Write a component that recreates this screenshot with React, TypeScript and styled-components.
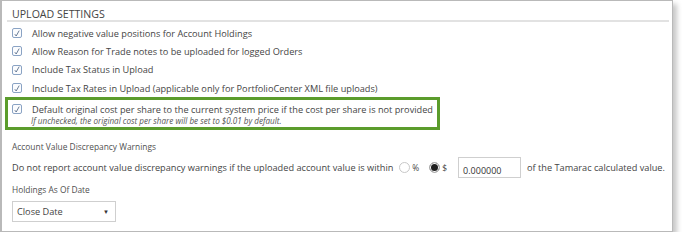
import styled, { createGlobalStyle } from "styled-components";

const GlobalStyle = createGlobalStyle`
  body {
    margin: 0;
    background: #ffffff;
    font-family: "Open Sans", "Noto Sans", sans-serif;
  }
`;

const Panel = styled.section`
  width: 673px;
  height: 232px;
  box-sizing: border-box;
  border: 1px solid #b9b9b9;
  border-left-width: 2px;
  background: #ffffff;
  box-shadow: 4px 4px 5px rgba(0, 0, 0, 0.22);
  padding: 7px 3px 0 5px;
  color: #474747;
`;

const Header = styled.div`
  border-bottom: 2px solid #e2e2e2;
  padding: 0 0 0 5px;
`;

const Title = styled.h2`
  margin: 0;
  font-size: 10.6px;
  font-weight: 400;
  line-height: 12px;
  color: #444444;
`;

const CheckList = styled.div`
  display: flex;
  flex-direction: column;
  padding: 2px 0 0 5px;
`;

const CheckRow = styled.label`
  display: flex;
  align-items: center;
  gap: 10px;
  height: 18.3px;
  font-size: 9.2px;
  color: #454545;
`;

const Box = styled.span`
  width: 8px;
  height: 8px;
  flex: none;
  border: 1px solid #8aa3c4;
  border-radius: 2px;
  background: #fbfcfe;
  display: flex;
  align-items: center;
  justify-content: center;
`;

const Highlight = styled.div`
  margin-left: -7px;
  width: 435px;
  box-sizing: border-box;
  border: 3px solid #5b9c2c;
  padding: 0 0 0 4px;
  height: 33px;
  display: flex;
  flex-direction: column;
`;

const Note = styled.div`
  font-size: 8.1px;
  font-style: italic;
  color: #555555;
  padding-left: 19px;
  margin-top: -3px;
`;

const Group = styled.div`
  padding: 0 0 0 5px;
`;

const Label = styled.div<{ $top: number }>`
  font-size: 8.4px;
  color: #505050;
  margin-top: ${(p) => p.$top}px;
  line-height: 12px;
`;

const Line = styled.div`
  display: flex;
  align-items: center;
  font-size: 9.2px;
  color: #454545;
  margin-top: 3px;
  height: 22px;
`;

const Radio = styled.span<{ $on?: boolean; $gap?: number }>`
  width: 9px;
  height: 9px;
  border-radius: 50%;
  border: 1px solid ${(p) => (p.$on ? "#b8b8b8" : "#c8c8c8")};
  background: ${(p) => (p.$on ? "#1e1e1e" : "#ffffff")};
  box-shadow: ${(p) => (p.$on ? "inset 0 0 0 1px #ffffff" : "none")};
  margin: 0 2px 0 ${(p) => p.$gap ?? 4}px;
  flex: none;
`;

const Unit = styled.span`
  font-size: 8.4px;
  margin-right: 6px;
`;

const Amount = styled.span`
  width: 63px;
  height: 21px;
  box-sizing: border-box;
  border: 1px solid #cfcfcf;
  padding: 6px 0 0 4px;
  font-size: 9px;
  color: #333333;
  margin: 0 6px 0 5px;
`;

const Select = styled.div`
  margin-top: 5px;
  width: 104px;
  height: 21px;
  box-sizing: border-box;
  border: 1px solid #cfcfcf;
  display: flex;
  align-items: center;
  justify-content: space-between;
  padding: 0 6px 0 4px;
  font-size: 9.2px;
  color: #444444;
`;

const Caret = styled.span`
  font-size: 6px;
  color: #333333;
`;

function Check() {
  return (
    <Box>
      <svg width="6" height="7" viewBox="0 0 6 7">
        <path d="M0.8 4.2 L2.2 6 L5.2 0.6" fill="none" stroke="#5a6f8c" strokeWidth="0.9" />
      </svg>
    </Box>
  );
}

const options = [
  "Allow negative value positions for Account Holdings",
  "Allow Reason for Trade notes to be uploaded for logged Orders",
  "Include Tax Status in Upload",
  "Include Tax Rates in Upload (applicable only for PortfolioCenter XML file uploads)",
];

export default function App() {
  return (
    <>
      <GlobalStyle />
      <Panel>
        <Header>
          <Title>UPLOAD SETTINGS</Title>
        </Header>
        <CheckList>
          {options.map((text) => (
            <CheckRow key={text}>
              <Check />
              {text}
            </CheckRow>
          ))}
          <Highlight>
            <CheckRow>
              <Check />
              Default original cost per share to the current system price if the cost per share is not provided
            </CheckRow>
            <Note>If unchecked, the original cost per share will be set to $0.01 by default.</Note>
          </Highlight>
        </CheckList>
        <Group>
          <Label $top={11}>Account Value Discrepancy Warnings</Label>
          <Line>
            Do not report account value discrepancy warnings if the uploaded account value is within
            <Radio $gap={6} />
            <Unit>%</Unit>
            <Radio $on />
            <Unit>$</Unit>
            <Amount>0.000000</Amount>
            of the Tamarac calculated value.
          </Line>
          <Label $top={6}>Holdings As Of Date</Label>
          <Select>
            Close Date
            <Caret>▼</Caret>
          </Select>
        </Group>
      </Panel>
    </>
  );
}
